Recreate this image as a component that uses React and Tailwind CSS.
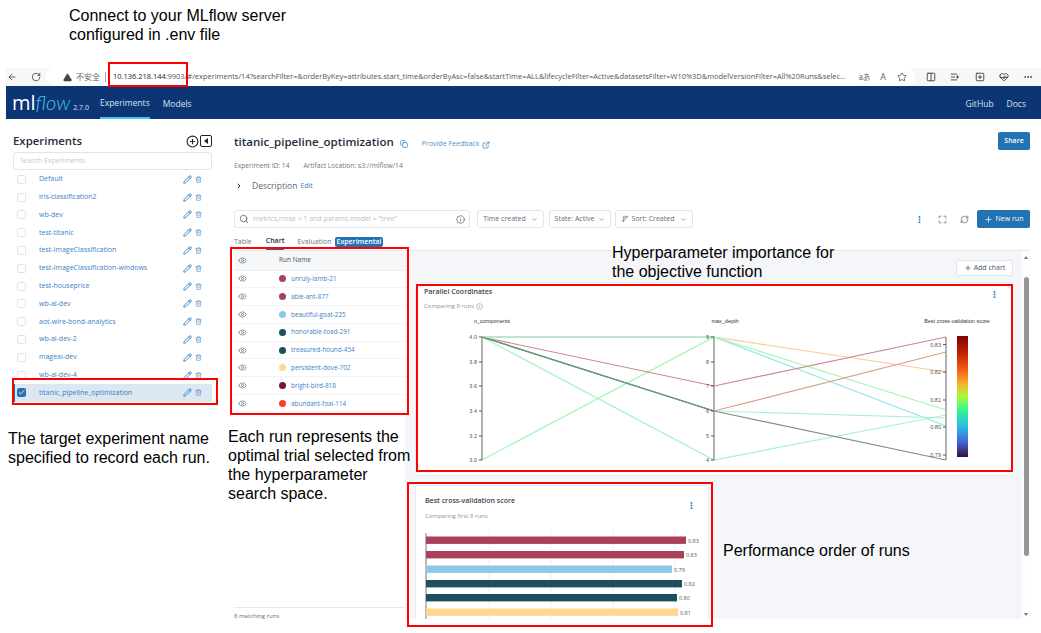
import React from 'react';
import {
    ArrowLeft, RotateCw, TriangleAlert, Star, Columns2, ListPlus, SquarePlus, HeartPulse, MoreHorizontal,
    Copy, ExternalLink, ChevronRight, ChevronDown, Search, Info, MoreVertical, Maximize, RefreshCw, Plus,
    Pencil, Trash2, Eye, Check, CirclePlus, ArrowDownWideNarrow
} from 'lucide-react';

const experiments = [
    'Default', 'iris-classification2', 'wb-dev', 'test-titanic', 'test-ImageClassification',
    'test-ImageClassification-windows', 'test-houseprice', 'wb-ai-dev', 'aot-wire-bond-analytics',
    'wb-ai-dev-2', 'mageai-dev', 'wb-ai-dev-4', 'titanic_pipeline_optimization'
];

const runs = [
    { name: 'unruly-lamb-21', color: '#a9415a' },
    { name: 'able-ant-877', color: '#a9415a' },
    { name: 'beautiful-goat-225', color: '#8cc8e8' },
    { name: 'honorable-toad-291', color: '#1d4f61' },
    { name: 'treasured-hound-454', color: '#1d4f61' },
    { name: 'persistent-dove-702', color: '#fed88f' },
    { name: 'bright-bird-818', color: '#7a1436' },
    { name: 'abundant-foal-114', color: '#f5402c' }
];

const parallelLines = [
    { a: 337, b: 337, c: 372, color: '#fbc98d' },
    { a: 337, b: 337, c: 426, color: '#8fe6ee' },
    { a: 337, b: 460, c: 415, color: '#a5f5c4' },
    { a: 460, b: 337, c: 410, color: '#a5f5b4' },
    { a: 337, b: 411, c: 352, color: '#e09a8c' },
    { a: 337, b: 411, c: 418, color: '#a8efd8' },
    { a: 337, b: 411, c: 460, color: '#7f8f8a' },
    { a: 337, b: 386, c: 337, color: '#c98a8a' }
];

const bars = [
    { y: 537.5, end: 686, color: '#a9415a', label: '0.83' },
    { y: 552, end: 684, color: '#a9415a', label: '0.83' },
    { y: 566.5, end: 672, color: '#8cc8e8', label: '0.79' },
    { y: 581, end: 682, color: '#1d4f61', label: '0.82' },
    { y: 595, end: 677, color: '#1d4f61', label: '0.80' },
    { y: 609.5, end: 678, color: '#fed88f', label: '0.81' }
];

const ParallelChart = () => (
    <svg width="596" height="164" viewBox="416 311 596 164" className="block" fontFamily="'Liberation Sans', sans-serif">
        <defs>
            <linearGradient id="turbo" x1="0" y1="0" x2="0" y2="1">
                <stop offset="0" stopColor="#7a0403" />
                <stop offset="0.15" stopColor="#c42503" />
                <stop offset="0.3" stopColor="#f66b19" />
                <stop offset="0.4" stopColor="#f5b52e" />
                <stop offset="0.5" stopColor="#a4fc3c" />
                <stop offset="0.62" stopColor="#2ff597" />
                <stop offset="0.75" stopColor="#28bbec" />
                <stop offset="0.88" stopColor="#4662d7" />
                <stop offset="1" stopColor="#30123b" />
            </linearGradient>
        </defs>
        {parallelLines.map((l, i) => (
            <polyline key={i} points={`482,${l.a} 714,${l.b} 946,${l.c}`} fill="none" stroke={l.color} strokeWidth="1.2" />
        ))}
        {/* overlapping runs blend: pale along 4.0 to 9, dark green along 4.0 to 6 */}
        <line x1="482" x2="714" y1="337" y2="337" stroke="#b5e5cc" strokeWidth="1.2" />
        <line x1="482" x2="714" y1="337" y2="411" stroke="#5f9a7e" strokeWidth="1.2" />
        {[482, 714, 946].map(x => (
            <line key={x} x1={x} y1="337" x2={x} y2="460" stroke="#999" strokeWidth="1.5" />
        ))}
        {[['4.0', 337], ['3.8', 362], ['3.6', 386], ['3.4', 411], ['3.2', 436], ['3.0', 460]].map(([t, y]) => (
            <g key={t}>
                <line x1="479" x2="482" y1={y} y2={y} stroke="#555" />
                <text x="477" y={y + 2} fontSize="5.5" fill="#555" textAnchor="end">{t}</text>
            </g>
        ))}
        {[['9', 337], ['8', 362], ['7', 386], ['6', 411], ['5', 436], ['4', 460]].map(([t, y]) => (
            <g key={t}>
                <line x1="711" x2="714" y1={y} y2={y} stroke="#555" />
                <text x="709" y={y + 2} fontSize="5.5" fill="#555" textAnchor="end">{t}</text>
            </g>
        ))}
        {[['0.83', 344.5], ['0.82', 372], ['0.81', 400], ['0.80', 427], ['0.79', 455]].map(([t, y]) => (
            <g key={t}>
                <line x1="943" x2="946" y1={y} y2={y} stroke="#555" />
                <text x="941" y={y + 2} fontSize="5.5" fill="#555" textAnchor="end">{t}</text>
            </g>
        ))}
        <text x="492" y="322.5" fontSize="5.5" fill="#333" textAnchor="middle">n_components</text>
        <text x="725" y="322.5" fontSize="5.5" fill="#333" textAnchor="middle">max_depth</text>
        <text x="957" y="322.5" fontSize="5.5" fill="#333" textAnchor="middle">Best cross-validation score</text>
        <rect x="957" y="336" width="11" height="121" fill="url(#turbo)" />
    </svg>
);

const BarChart = () => (
    <svg width="292" height="90" viewBox="416 530 292 90" className="block" fontFamily="'Open Sans', sans-serif">
        {[489, 551, 613, 675].map(x => (
            <line key={x} x1={x} x2={x} y1="530" y2="620" stroke="#eef0f3" />
        ))}
        <line x1="426" x2="426" y1="534" y2="620" stroke="#777" />
        {bars.map(b => (
            <g key={b.y}>
                <rect x="426" y={b.y} width={b.end - 426} height="7.4" fill={b.color} />
                <text x={b.end + 2} y={b.y + 6} fontSize="5.5" fill="#555">{b.label}</text>
            </g>
        ))}
    </svg>
);

export default function App() {
    return (
        <div className="relative w-[1041px] h-[633px] overflow-hidden bg-white font-['Open_Sans',sans-serif]">
            <div className="ml-[6px] pt-[68px] h-[619px] flex flex-col overflow-hidden">
                {/* browser bar */}
                <div className="h-[18px] shrink-0 flex items-center bg-[#f7f7f7] text-[#555] text-[7.45px]">
                    <ArrowLeft size={10} className="ml-[1px] text-[#444]" />
                    <RotateCw size={10} className="ml-[14px] text-[#444]" />
                    <div className="ml-[5px] flex-1 h-full flex items-center bg-white rounded-full pl-[17px] min-w-0">
                        <TriangleAlert size={9} fill="#444" className="text-[#444] shrink-0" />
                        <span className="ml-[4px] text-[8px] text-[#666] font-['Noto_Sans_CJK_SC',sans-serif] shrink-0">不安全</span>
                        <span className="ml-[5px] mr-[7px] w-px h-[10px] bg-[#aaa] shrink-0"></span>
                        <span className="whitespace-nowrap overflow-hidden flex-1">
                            <span className="text-[#222]">10.136.218.144</span>:9903/#/experiments/14?searchFilter=&orderByKey=attributes.start_time&orderByAsc=false&startTime=ALL&lifecycleFilter=Active&datasetsFilter=W10%3D&modelVersionFilter=All%20Runs&selec...
                        </span>
                        <span className="ml-[6px] text-[#666] font-['Noto_Sans_CJK_SC',sans-serif] whitespace-nowrap">aあ</span>
                        <span className="ml-[10px] text-[9px] text-[#666]">A</span>
                        <Star size={10} className="ml-[11px] mr-[8px] text-[#555]" />
                    </div>
                    <Columns2 size={10} className="ml-[11px] text-[#333]" />
                    <ListPlus size={10} className="ml-[14px] text-[#333]" />
                    <SquarePlus size={10} className="ml-[15px] text-[#333]" />
                    <HeartPulse size={10} className="ml-[14px] text-[#333]" />
                    <MoreHorizontal size={10} className="ml-[14px] mr-[8px] text-[#333]" />
                </div>

                {/* mlflow nav */}
                <div className="h-[33px] shrink-0 flex items-stretch bg-[#0d3574] text-[#d5e4f3] text-[8.5px]">
                    <div className="ml-[6px] w-[88px] flex items-baseline pt-[3px] whitespace-nowrap">
                        <span className="text-white text-[20px] leading-[26px]">ml</span>
                        <span className="text-[#43c9ed] text-[20px] leading-[26px] italic font-light font-['Lato',sans-serif]">flow</span>
                        <span className="ml-[3px] text-[7px] text-[#d5e4f3]">2.7.0</span>
                    </div>
                    <div className="flex items-center border-b-2 border-[#43c9ed] pt-[4px]">Experiments</div>
                    <div className="ml-[13px] flex items-center pt-[3px]">Models</div>
                    <div className="ml-auto flex items-center pt-[3px]">GitHub</div>
                    <div className="ml-[13px] mr-[15px] flex items-center pt-[3px]">Docs</div>
                </div>

                {/* body */}
                <div className="flex-1 min-h-0 flex">
                    {/* sidebar */}
                    <div className="w-[216px] shrink-0 pl-[7px] pr-[10px] pt-[15px]">
                        <div className="h-[14px] flex items-center justify-between">
                            <span className="text-[11.4px] font-semibold text-[#1f2d3d]">Experiments</span>
                            <div className="flex items-center gap-[1px]">
                                <CirclePlus size={13} className="text-[#222]" />
                                <span className="w-[12px] h-[12px] border border-[#222] rounded-[2px] flex items-center justify-center">
                                    <span className="w-0 h-0 border-y-[3px] border-y-transparent border-r-[4px] border-r-[#222]"></span>
                                </span>
                            </div>
                        </div>
                        <div className="mt-[4px] h-[18px] border border-[#dfe5ec] rounded-[3px] flex items-center pl-[6px] text-[7px] text-[#c3ccd5]">Search Experiments</div>
                        <div className="mt-[0.5px]">
                            {experiments.map((name, i) => {
                                const selected = i === experiments.length - 1;
                                return (
                                    <div key={name} className={`h-[17.8px] flex items-center text-[7px] text-[#3b82c4] ${selected ? 'bg-[#dce7f2] border-l-2 border-[#2272b4] pl-[2px]' : 'pl-[4px]'}`}>
                                        <span className={`w-[9px] h-[9px] rounded-[2px] flex items-center justify-center shrink-0 ${selected ? 'bg-[#2272b4]' : 'border border-[#dfe5ec] bg-white'}`}>
                                            {selected && <Check size={7} strokeWidth={3} className="text-white" />}
                                        </span>
                                        <span className="ml-[13px] flex-1 whitespace-nowrap">{name}</span>
                                        <Pencil size={9} strokeWidth={2.5} className="text-[#3b82c4] mr-[3px]" />
                                        <Trash2 size={7} className="text-[#5a8fbf] mr-[10px]" />
                                    </div>
                                );
                            })}
                        </div>
                    </div>

                    {/* main */}
                    <div className="flex-1 min-w-0 pl-[12px] pr-[11px] flex flex-col">
                        <div className="mt-[13px] h-[18px] flex items-center">
                            <span className="pt-[2px] text-[11.5px] font-semibold text-[#1f2d3d]">titanic_pipeline_optimization</span>
                            <Copy size={8} className="ml-[6px] mt-[5px] text-[#2272b4]" />
                            <span className="ml-[14px] pt-[7px] text-[7px] text-[#5a8fbf]">Provide Feedback</span>
                            <ExternalLink size={8} className="ml-[3px] mt-[7px] text-[#2272b4]" />
                            <span className="ml-auto w-[32px] h-[18px] rounded-[2px] bg-[#2272b4] text-white text-[7px] font-semibold flex items-center justify-center">Share</span>
                        </div>
                        <div className="mt-[11px] h-[10px] flex items-center gap-[14px] text-[6.7px] text-[#6b7785]">
                            <span>Experiment ID: 14</span>
                            <span>Artifact Location: s3://mlflow/14</span>
                        </div>
                        <div className="mt-[9px] h-[12px] flex items-center">
                            <ChevronRight size={8} strokeWidth={3} className="ml-[1px] text-[#333]" />
                            <span className="ml-[9px] text-[8.5px] text-[#5f6b78]">Description</span>
                            <span className="ml-[3px] text-[7px] text-[#3b82c4]">Edit</span>
                        </div>

                        {/* filters */}
                        <div className="mt-[18px] h-[18px] flex items-center text-[7px] text-[#5f6b78]">
                            <div className="w-[236px] h-full border border-[#dfe5ec] rounded-[3px] flex items-center px-[4px] text-[#b9c3cd]">
                                <Search size={10} className="text-[#5f6b78]" />
                                <span className="ml-[4px] flex-1">metrics.rmse &lt; 1 and params.model = "tree"</span>
                                <Info size={9} className="text-[#5f6b78]" />
                            </div>
                            <div className="ml-[7px] w-[67px] h-full border border-[#dfe5ec] rounded-[3px] flex items-center justify-center gap-[5px]">Time created<ChevronDown size={7} /></div>
                            <div className="ml-[5px] w-[62px] h-full border border-[#dfe5ec] rounded-[3px] flex items-center justify-center gap-[4px]">State: Active<ChevronDown size={7} /></div>
                            <div className="ml-[4px] w-[78px] h-full border border-[#dfe5ec] rounded-[3px] flex items-center justify-center gap-[3px]"><ArrowDownWideNarrow size={8} />Sort: Created<ChevronDown size={7} className="ml-[3px]" /></div>
                            <MoreVertical size={9} strokeWidth={3} className="ml-auto text-[#2272b4]" />
                            <Maximize size={9} className="ml-[14px] text-[#5f6b78]" />
                            <RefreshCw size={9} className="ml-[13px] text-[#5f6b78]" />
                            <span className="ml-[8px] w-[53px] h-full rounded-[2px] bg-[#2272b4] text-white flex items-center justify-center gap-[3px]"><Plus size={9} />New run</span>
                        </div>

                        {/* tabs */}
                        <div className="mt-[8px] h-[15px] shrink-0 flex items-center text-[7px] text-[#6b7785] border-b border-[#e4e9ee]">
                            <span className="pb-[2px]">Table</span>
                            <span className="ml-[14px] h-full flex items-center pb-[2px] border-b border-[#2272b4] text-[#1f2d3d] font-semibold">Chart</span>
                            <span className="ml-[13px] pb-[2px]">Evaluation</span>
                            <span className="ml-[4px] mb-[2px] px-[1px] rounded-[2px] bg-[#2272b4] text-white font-semibold">Experimental</span>
                        </div>

                        {/* run list and charts */}
                        <div className="flex-1 min-h-0 flex">
                            <div className="w-[171px] shrink-0 flex flex-col">
                                <div className="h-[19.5px] flex items-center bg-[#f5f7f9] text-[6.5px] font-medium text-[#4a5663] border-b border-[#eceff3]">
                                    <Eye size={9} className="ml-[4px] text-[#6b7785]" />
                                    <span className="ml-[32px]">Run Name</span>
                                </div>
                                {runs.map(run => (
                                    <div key={run.name} className="h-[17.8px] flex items-center text-[6.4px] text-[#3b82c4] border-b border-[#f2f4f7]">
                                        <Eye size={9} className="ml-[4px] text-[#6b7785]" />
                                        <span className="ml-[32px] w-[7px] h-[7px] rounded-full" style={{ backgroundColor: run.color }}></span>
                                        <span className="ml-[5px]">{run.name}</span>
                                    </div>
                                ))}
                                <div className="mt-auto h-[12px] border-t border-[#e4e9ee] pt-[4px] text-[6px] leading-[9px] text-[#5f6b78]">8 matching runs</div>
                            </div>

                            <div className="flex-1 min-w-0 bg-[#f4f6f9] flex">
                                <div className="flex-1 min-w-0 pl-[10px]">
                                    <div className="mt-[9px] h-[16px] mr-[9px] flex justify-end">
                                        <span className="w-[57px] h-full bg-white border border-[#dfe5ec] rounded-[2px] flex items-center justify-center gap-[2px] text-[7px] text-[#4a5663]"><Plus size={8} />Add chart</span>
                                    </div>
                                    <div className="mt-[6px] w-[598px] h-[194px] bg-white border border-[#e9edf1] rounded-[2px] relative">
                                        <div className="pl-[8px] pt-[4px] h-[13px] text-[7px] leading-[10px] font-semibold text-[#3a4653]">Parallel Coordinates</div>
                                        <div className="pl-[8px] mt-[6px] h-[9px] leading-[9px] flex items-center gap-[2px] text-[6px] text-[#8a95a1]">Comparing 8 runs <Info size={7} /></div>
                                        <MoreVertical size={9} strokeWidth={3} className="absolute top-[7px] right-[13px] text-[#2272b4]" />
                                        <div className="-mt-[0.5px]"><ParallelChart /></div>
                                    </div>
                                    <div className="mt-[9px] w-[294px] h-[150px] bg-white border border-[#e9edf1] rounded-[2px] relative">
                                        <div className="pl-[9px] pt-[10px] text-[7px] leading-[10px] font-semibold text-[#3a4653]">Best cross-validation score</div>
                                        <div className="pl-[9px] mt-[6px] h-[9px] leading-[9px] text-[6px] text-[#8a95a1]">Comparing first 8 runs</div>
                                        <MoreVertical size={9} strokeWidth={3} className="absolute top-[15px] right-[12px] text-[#2272b4]" />
                                        <div className="mt-[8px]"><BarChart /></div>
                                    </div>
                                </div>
                                {/* page scrollbar */}
                                <div className="w-[8px] shrink-0 flex flex-col items-center bg-[#fdfdfd]">
                                    <span className="mt-[5px] w-0 h-0 border-x-[2.5px] border-x-transparent border-b-[3px] border-b-[#777]"></span>
                                    <div className="mt-[18px] w-[5px] h-[279px] rounded-full bg-[#969696]"></div>
                                    <span className="mt-auto mb-[3px] w-0 h-0 border-x-[2.5px] border-x-transparent border-t-[3px] border-t-[#777]"></span>
                                </div>
                            </div>
                        </div>
                    </div>
                </div>
            </div>

            {/* annotations laid over the screenshot */}
            <div className="font-['Liberation_Sans',sans-serif] text-[16px] leading-[19px] text-black">
                <p className="absolute left-[69px] top-[6px] whitespace-nowrap">Connect to your MLflow server<br />configured in .env file</p>
                <p className="absolute left-[8px] top-[429px] whitespace-nowrap">The target experiment name<br />specified to record each run.</p>
                <p className="absolute left-[228px] top-[427px] whitespace-nowrap">Each run represents the<br />optimal trial selected from<br />the hyperparameter<br />search space.</p>
                <p className="absolute left-[612px] top-[243px] whitespace-nowrap">Hyperparameter importance for<br />the objective function</p>
                <p className="absolute left-[723px] top-[541px] whitespace-nowrap">Performance order of runs</p>
            </div>
            <div className="absolute left-[108px] top-[62px] w-[80px] h-[25px] border-2 border-[#f00]"></div>
            <div className="absolute left-[12px] top-[378px] w-[206px] h-[27px] border-2 border-[#f00]"></div>
            <div className="absolute left-[230px] top-[247px] w-[179px] h-[168px] border-2 border-[#f00]"></div>
            <div className="absolute left-[416px] top-[284px] w-[597px] h-[188px] border-2 border-[#f00]"></div>
            <div className="absolute left-[407px] top-[482px] w-[306px] h-[145px] border-2 border-[#f00]"></div>
        </div>
    );
}
